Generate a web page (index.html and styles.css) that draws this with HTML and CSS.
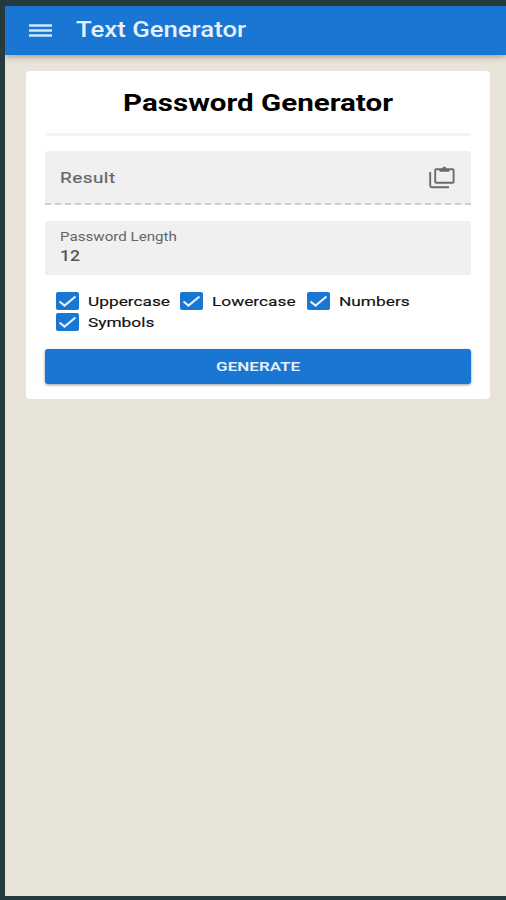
FILE: index.html
```html
<!DOCTYPE html>
<html lang="en">
<head>
  <meta charset="UTF-8" />
  <title>Text Generator</title>
  <link rel="stylesheet" href="styles.css">
</head>
<body>
  <div class="app">
    <header class="toolbar">
      <svg class="menu-icon" viewBox="0 0 23 14">
        <path d="M0 1.5h23M0 6.5h23M0 11.5h23" />
      </svg>
      <span class="toolbar-title wide">Text Generator</span>
    </header>

    <main class="card">
      <h1><span class="wide">Password Generator</span></h1>
      <hr>

      <div class="field result">
        <span class="result-label wide">Result</span>
        <svg class="copy-icon" viewBox="0 0 26 23">
          <path d="M1.2 6v13.7q0 1.5 1.5 1.5H20" />
          <rect x="6.2" y="3.3" width="18.4" height="13.4" rx="1" />
          <path class="clip" d="M10.5 3H13Q13.5 .5 15.4 .5T17.8 3h2.5v2.8h-9.8z" />
        </svg>
      </div>

      <div class="field length">
        <span class="length-label wide">Password Length</span>
        <span class="length-value wide">12</span>
      </div>

      <div class="options">
        <label class="option upper">
          <svg class="check" viewBox="0 0 23 18"><path d="M3.5 9.5l5 4L19.5 4.5" /></svg>
          <span class="wide">Uppercase</span>
        </label>
        <label class="option lower">
          <svg class="check" viewBox="0 0 23 18"><path d="M3.5 9.5l5 4L19.5 4.5" /></svg>
          <span class="wide">Lowercase</span>
        </label>
        <label class="option numbers">
          <svg class="check" viewBox="0 0 23 18"><path d="M3.5 9.5l5 4L19.5 4.5" /></svg>
          <span class="wide">Numbers</span>
        </label>
        <label class="option symbols">
          <svg class="check" viewBox="0 0 23 18"><path d="M3.5 9.5l5 4L19.5 4.5" /></svg>
          <span class="wide">Symbols</span>
        </label>
      </div>

      <button class="generate"><span class="wide">GENERATE</span></button>
    </main>
  </div>
</body>
</html>
```

FILE: styles.css
```css
* {
  box-sizing: border-box;
}
body {
  margin: 0;
  background: #263b3f;
  font-family: Roboto, sans-serif;
  color: #111;
}
.app {
  height: 900px;
  border: solid #263b3f;
  border-width: 6px 0 4px 5px;
  background: #e8e4da;
}
/* letters are drawn wider than the font's own shape */
.wide {
  display: inline-block;
  transform: scaleX(1.26);
  transform-origin: left center;
  white-space: nowrap;
}
.toolbar {
  display: flex;
  align-items: center;
  height: 49px;
  padding: 0 0 3px 24px;
  background: #1976d2;
  color: #e3f0ff;
  box-shadow: 0 2px 6px rgba(80, 50, 40, 0.4);
}
.menu-icon {
  width: 23px;
  height: 14px;
  margin-top: 4px;
  fill: none;
  stroke: #d4e7fb;
  stroke-width: 2.4;
}
.toolbar-title {
  margin-left: 24px;
  font-size: 22px;
  font-weight: 500;
  transform: scaleX(1.17);
}
.card {
  width: 464px;
  height: 328px;
  margin: 16px 0 0 21px;
  padding: 0 19px;
  border-radius: 4px;
  background: #fff;
}
h1 {
  margin: 0;
  height: 62px;
  padding-top: 2px;
  line-height: 62px;
  font-size: 23px;
  font-weight: 700;
  text-align: center;
  color: #000;
}
h1 .wide,
.generate .wide {
  transform: scaleX(1.285);
  transform-origin: center;
}
hr {
  height: 3px;
  margin: 0 0 15px;
  border: 0;
  background: #f4f4f4;
}
.field {
  border-radius: 3px 3px 0 0;
  background: #f0f0f0;
  color: #666;
}
.result {
  display: flex;
  align-items: center;
  justify-content: space-between;
  height: 54px;
  padding: 0 16px 0 15px;
  border-bottom: 2px dashed #cfcfcf;
}
.result-label {
  padding-top: 2px;
  font-size: 15px;
  font-weight: 400;
  letter-spacing: 0.4px;
  transform: scaleX(1.26);
  -webkit-text-stroke: 0.2px #666;
}
.copy-icon {
  width: 26px;
  height: 23px;
  fill: none;
  stroke: #6b6b6b;
  stroke-width: 1.9;
}
.copy-icon .clip {
  fill: #6b6b6b;
  stroke: none;
}
.length {
  display: flex;
  flex-direction: column;
  align-items: flex-start;
  height: 54px;
  margin-top: 16px;
  padding: 8px 15px 0;
}
.length-label {
  line-height: 17px;
  font-size: 12px;
}
.length-value {
  line-height: 20px;
  font-size: 14px;
  font-weight: 500;
  color: #555;
}
.options {
  display: flex;
  flex-wrap: wrap;
  row-gap: 3px;
  margin: 17px 0 0 11px;
}
.option {
  display: flex;
  align-items: center;
  gap: 9px;
  height: 18px;
  font-size: 13px;
  font-weight: 400;
}
.option .wide {
  transform: scaleX(1.33);
  -webkit-text-stroke: 0.15px #111;
}
.upper {
  width: 124px;
}
.lower {
  width: 127px;
}
.numbers {
  width: 130px;
}
.check {
  width: 23px;
  height: 18px;
  border-radius: 2px;
  background: #1976d2;
  fill: none;
  stroke: #e3f0ff;
  stroke-width: 2.2;
}
.generate {
  display: block;
  width: 100%;
  height: 35px;
  margin-top: 18px;
  padding: 0;
  border: 0;
  border-radius: 3px;
  background: #1976d2;
  color: #e3f0ff;
  font: 600 13px Roboto, sans-serif;
  box-shadow: 0 1px 3px rgba(0, 0, 0, 0.4);
}
.generate .wide {
  transform: scaleX(1.31);
}
```
